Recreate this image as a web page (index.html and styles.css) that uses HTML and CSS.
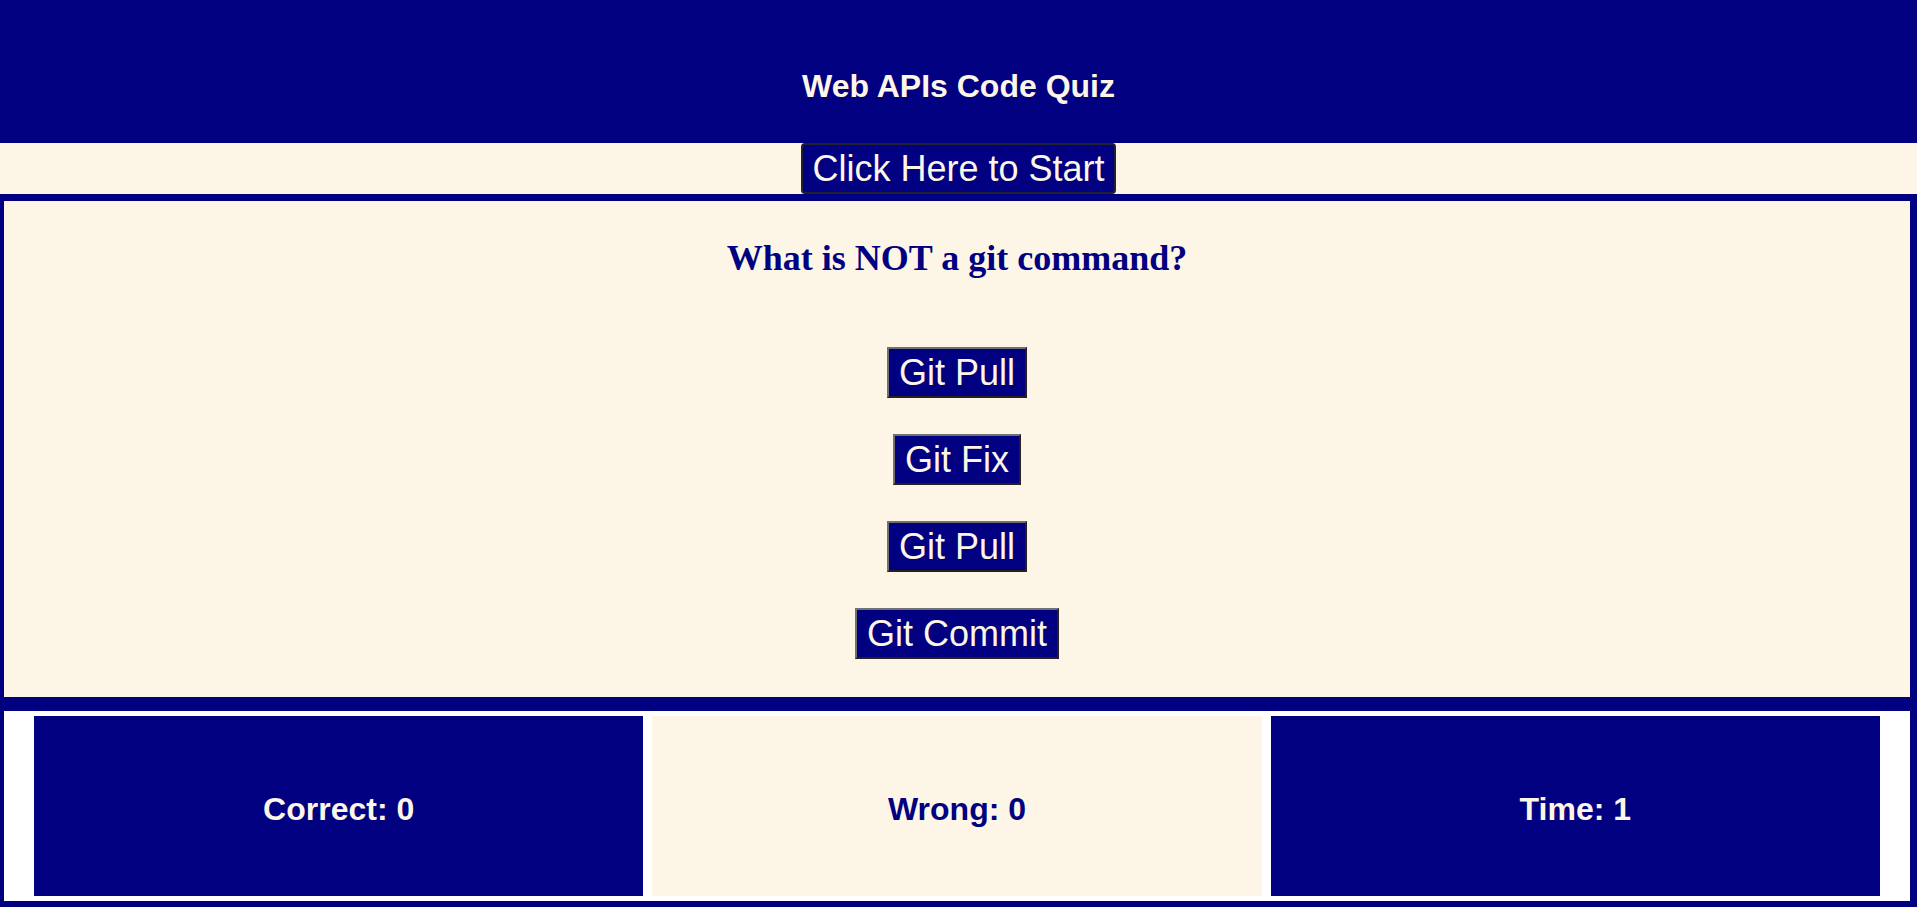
FILE: index.html
```html
<!DOCTYPE html>
<html lang="en">
<head>
<meta charset="utf-8">
<title>Web APIs Code Quiz</title>
<link rel="stylesheet" href="styles.css">
</head>
<body>
<header class="site-header">
  <h1 class="site-title">Web APIs Code Quiz</h1>
</header>
<div class="start-bar">
  <button class="btn start-btn" type="button">Click Here to Start</button>
</div>
<main class="main">
  <section class="quiz">
    <h2 class="question">What is NOT a git command?</h2>
    <div class="answers">
      <button class="btn answer-btn" type="button">Git Pull</button>
      <button class="btn answer-btn" type="button">Git Fix</button>
      <button class="btn answer-btn" type="button">Git Pull</button>
      <button class="btn answer-btn" type="button">Git Commit</button>
    </div>
  </section>
  <section class="scores">
    <div class="score score-dark">Correct: 0</div>
    <div class="score score-light">Wrong: 0</div>
    <div class="score score-dark">Time: 1</div>
  </section>
</main>
</body>
</html>
```
FILE: styles.css
```css
* {
  box-sizing: border-box;
}

html, body {
  margin: 0;
  padding: 0;
}

body {
  background: #000080;
  font-family: "Liberation Sans", Arial, sans-serif;
}

.site-header {
  height: 143px;
  background: #000080;
  padding-top: 68px;
  text-align: center;
}

.site-title {
  margin: 0;
  font-family: "Franklin Gothic Medium", "Liberation Sans", Arial, sans-serif;
  font-size: 32px;
  font-weight: bold;
  color: #fdf5e6;
}

.start-bar {
  background: #fdf5e6;
  display: flex;
  justify-content: center;
  height: 51px;
}

.btn {
  font-family: "Liberation Sans", Arial, sans-serif;
  font-size: 36px;
  line-height: 41px;
  color: #fdf5e6;
  background: #000080;
  padding: 3px 10px;
  margin: 0;
  cursor: pointer;
}

.start-btn {
  border: 2px solid #202030;
  border-radius: 4px;
  padding: 3px 9px;
}

.answer-btn {
  border-style: solid;
  border-width: 2px;
  border-color: #717171 #262020 #262020 #717171;
}

.main {
  padding: 7px 7px 6px 4px;
  display: flex;
  flex-direction: column;
  gap: 14px;
}

.quiz {
  background: #fdf5e6;
  padding: 37px 0 38px;
  display: flex;
  flex-direction: column;
  align-items: center;
}

.question {
  margin: 0;
  font-family: "Liberation Serif", "Times New Roman", serif;
  font-size: 36px;
  line-height: 41px;
  font-weight: bold;
  color: #000080;
}

.answers {
  margin-top: 68px;
  display: flex;
  flex-direction: column;
  align-items: center;
  gap: 36px;
}

.scores {
  background: #ffffff;
  padding: 5px 30px;
  display: grid;
  grid-template-columns: 1fr 1fr 1fr;
  gap: 9px;
}

.score {
  height: 180px;
  padding-top: 7px;
  display: flex;
  align-items: center;
  justify-content: center;
  font-family: "Franklin Gothic Medium", "Liberation Sans", Arial, sans-serif;
  font-size: 32px;
  font-weight: bold;
}

.score-dark {
  background: #000080;
  color: #fdf5e6;
}

.score-light {
  background: #fdf5e6;
  color: #000080;
}
```
